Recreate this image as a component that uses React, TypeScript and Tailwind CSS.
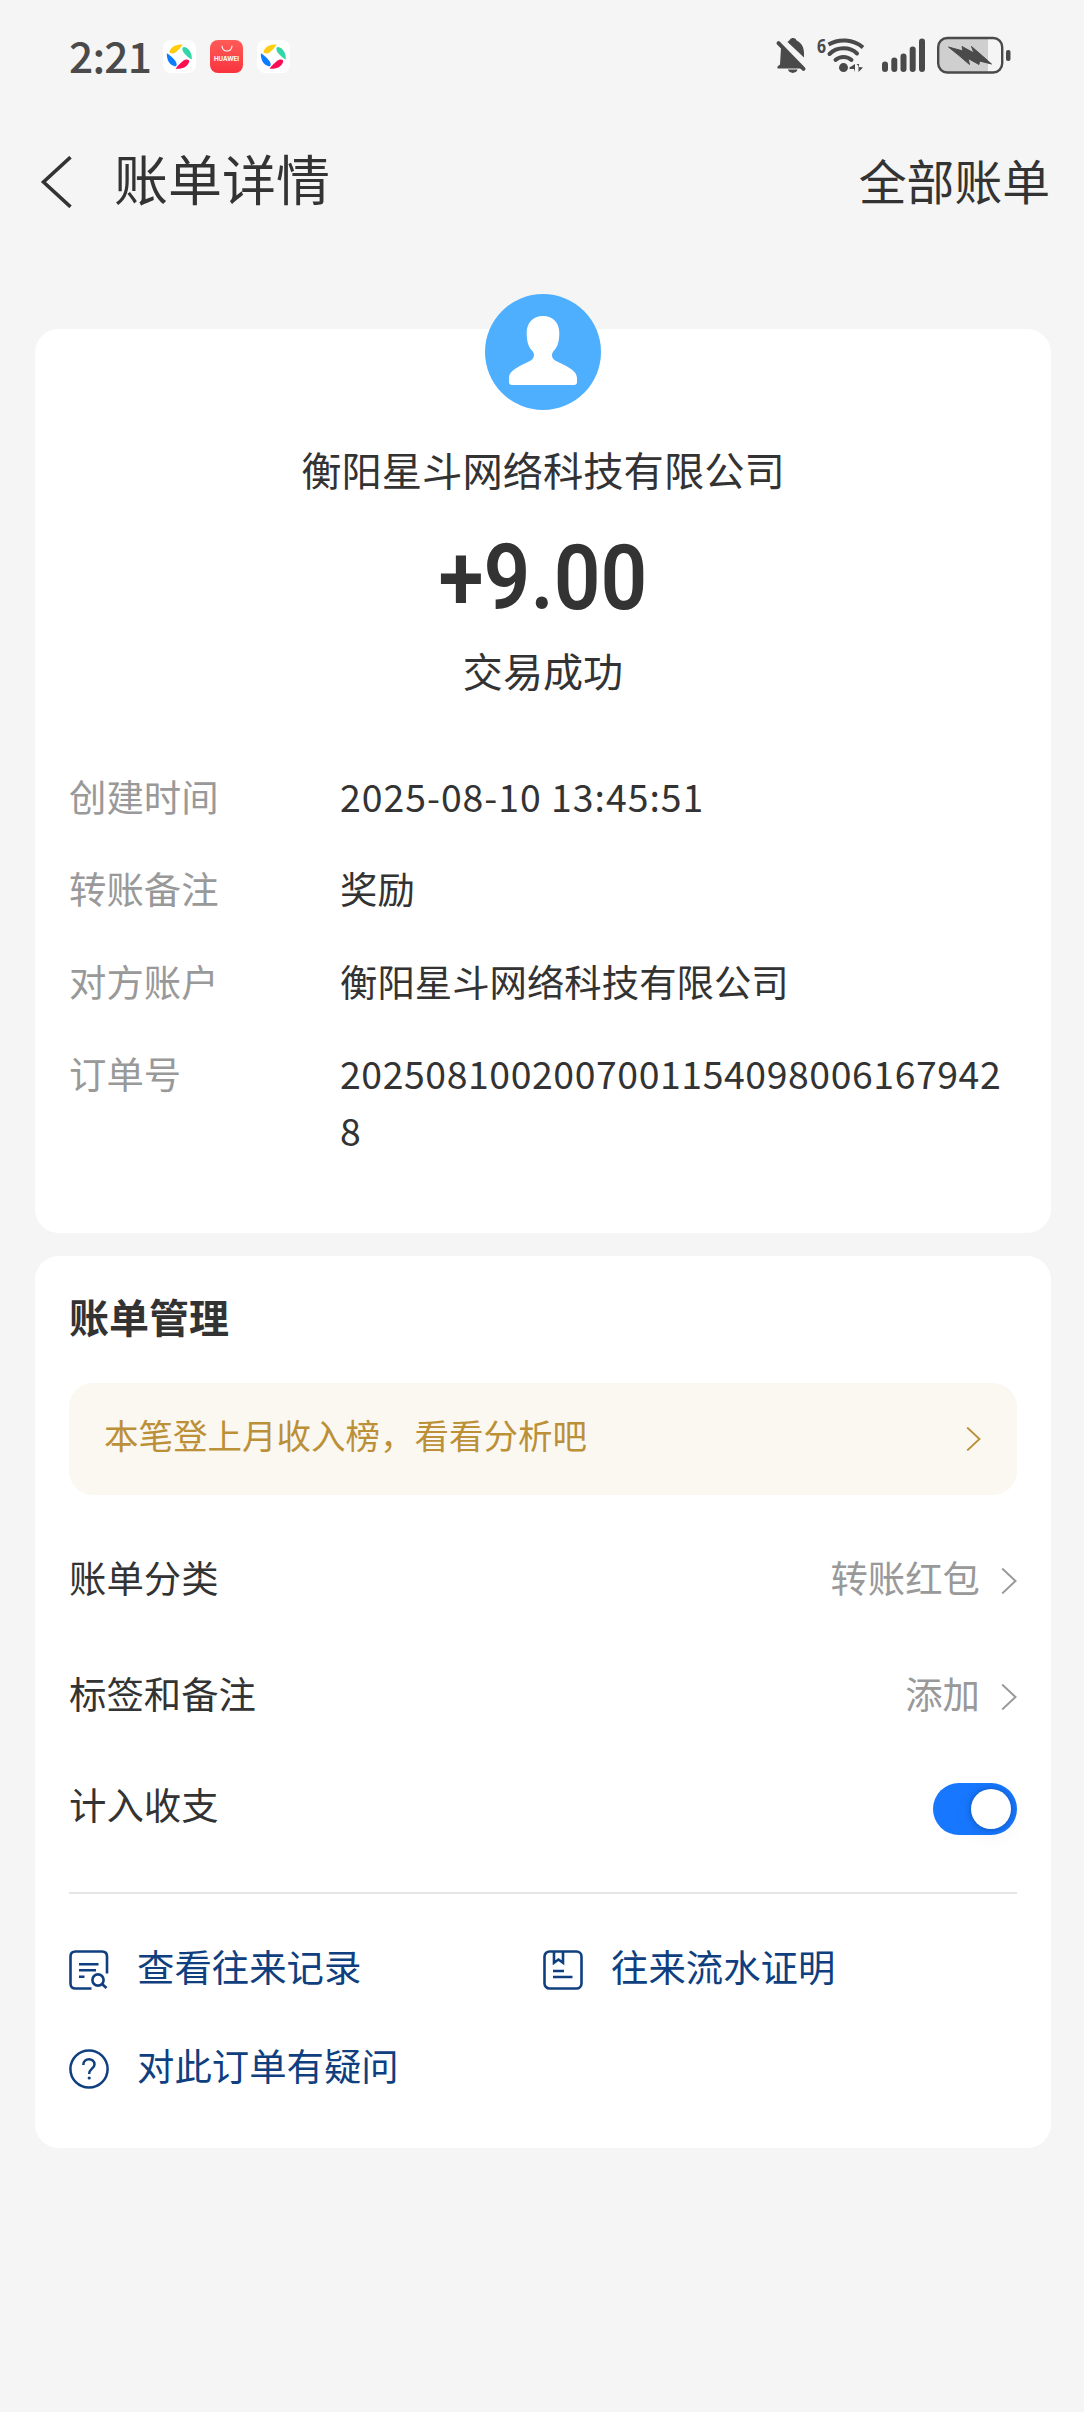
import React from 'react';

type Detail = { label: string; value: string; tracking?: string };

const details: Detail[] = [
  { label: '创建时间', value: '2025-08-10 13:45:51', tracking: 'tracking-[0.98px]' },
  { label: '转账备注', value: '奖励' },
  { label: '对方账户', value: '衡阳星斗网络科技有限公司' },
  { label: '订单号', value: '20250810020070011540980061679428', tracking: 'tracking-[0.58px]' },
];

const BrowserAppIcon = () => (
  <svg className="h-[33px] w-[33px]" viewBox="0 0 33 33" aria-hidden="true">
    <rect width="33" height="33" rx="8" fill="#fff" />
    <path d="M6.6 11.2C8.2 6.8 12.4 4.2 19.6 4.4C18.4 6.6 15.6 10 12.6 12.4C10.2 14.2 6.2 13.6 6.6 11.2Z" fill="#ffcd10" />
    <path d="M21.6 7C26 8.4 29 12.6 28.8 19.6C26.4 18.4 23 15.6 20.8 12.8C18.8 10 18.8 6.4 21.6 7Z" fill="#33d6a6" />
    <path d="M26.2 21.8C24.6 26.4 20.6 29.2 12.6 28.8C14 26.4 17.2 23.4 20.2 20.8C22.8 18.8 26.6 18.8 26.2 21.8Z" fill="#fb0d55" />
    <path d="M11.6 26.2C6.8 24.8 3.6 20.4 3.8 13.2C6.2 14.6 9.6 17.6 12 20.4C14.2 23.4 14.4 26.6 11.6 26.2Z" fill="#0a7cff" />
  </svg>
);

const StoreAppIcon = () => (
  <div className="flex h-[33px] w-[33px] flex-col items-center rounded-[8px] bg-gradient-to-b from-[#ff5a57] to-[#f9323f]">
    <svg className="mt-[5px] h-[8px] w-[14px]" viewBox="0 0 14 8" fill="none" stroke="#fff" strokeWidth="1.1" aria-hidden="true">
      <path d="M2 1C2.4 7.6 11.6 7.6 12 1" strokeLinecap="round" />
    </svg>
    <span className="mt-[2px] font-['Inter'] text-[6.2px] leading-[8px] font-bold text-white">HUAWEI</span>
  </div>
);

const StatusIcons = () => (
  <svg className="h-[40px] w-[240px] overflow-visible" viewBox="0 0 240 40" fill="#4a4a4a" aria-hidden="true">
    {/* muted bell */}
    <path d="M5 12L27 32.5H1.5V30.5L4 28.5Z" />
    <path d="M11.5 6C12.5 5 13.5 4.6 14 3.6C15 1.6 19 1.6 20 3.6C20.4 4.6 21.6 5 23 6C27 9 28.5 13 28 21.5Z" />
    <path d="M2.5 7.2L27.5 32.8" stroke="#4a4a4a" strokeWidth="4" strokeLinecap="round" />
    <path d="M12 33.6H21.5C20.5 38 13 38 12 33.6Z" />
    {/* wifi */}
    <g fill="none" stroke="#4a4a4a" strokeWidth="4">
      <path d="M52.5 8.6C63 2.5 77 3 87 11.5" />
      <path d="M53.5 18C61 10.5 74 10.5 81 17.5" strokeLinecap="round" />
      <path d="M59.5 24C64 20 71 20 75.5 24" strokeLinecap="round" />
    </g>
    <circle cx="67.5" cy="31.6" r="4.5" />
    <path d="M73.5 31.5L79 28V36L78 33H73.5ZM80.5 28H83V31L87 31.5L82.5 36V30Z" />
    <text x="41" y="17" fontFamily="Open Sans" fontSize="20" fontWeight="700" textLength="9" lengthAdjust="spacingAndGlyphs">6</text>
    {/* signal */}
    <rect x="106" y="25.5" width="6" height="10.5" rx="3" />
    <rect x="115.3" y="21.5" width="6" height="14.5" rx="3" />
    <rect x="124.5" y="17.5" width="6" height="18.5" rx="3" />
    <rect x="133.7" y="10.5" width="6" height="25.5" rx="3" />
    <rect x="143" y="2.5" width="6" height="33.5" rx="3" />
    {/* battery */}
    <path d="M170 2H212V36H170Q162.5 36 162.5 28V10Q162.5 2 170 2Z" fill="#cfcfcf" />
    <rect x="162.2" y="2" width="64" height="34.5" rx="9" fill="none" stroke="#4a4a4a" strokeWidth="2.4" />
    <path d="M172.5 11L187 15L186 10.5L198 17L195.5 10.5L206.5 20L215.5 28L203.5 25L203 28.5L192 22.5L193.5 28.5L183 19.5Z" stroke="#4a4a4a" strokeWidth="1" strokeLinejoin="round" />
    <rect x="230" y="14" width="4.5" height="11" rx="2" />
  </svg>
);

const Chevron: React.FC<{ className: string }> = ({ className }) => (
  <svg className={className} viewBox="0 0 16 26" fill="none" stroke="currentColor" strokeWidth="2" aria-hidden="true">
    <path d="M1.2 0.6L14.5 13L1.2 25.4" />
  </svg>
);

const RecordIcon = () => (
  <svg className="h-[40px] w-[40px]" viewBox="0 0 40 40" fill="none" stroke="currentColor" strokeWidth="2.6" aria-hidden="true">
    <path d="M22.5 38.5H6.5Q1.5 38.5 1.5 33.5V6.5Q1.5 1.5 6.5 1.5H33Q38 1.5 38 6.5V23.5" />
    <path d="M10 14.3H29.5M10 20.3H27M10 26.8H15.5" />
    <circle cx="29" cy="30" r="5.6" />
    <path d="M33 34L37.5 38" />
  </svg>
);

const ProofIcon = () => (
  <svg className="h-[40px] w-[40px]" viewBox="0 0 40 40" fill="none" stroke="currentColor" strokeWidth="2.6" aria-hidden="true">
    <rect x="1.5" y="1.5" width="37" height="37" rx="5" />
    <path d="M11 2V12.8L15.5 9.5L20 12.8V2M10 21H21M10 27H29.5" />
  </svg>
);

const HelpIcon = () => (
  <svg className="h-[40px] w-[40px]" viewBox="0 0 40 40" fill="none" stroke="currentColor" strokeWidth="2.5" aria-hidden="true">
    <circle cx="20" cy="20" r="18.6" />
    <path d="M14.3 16C14.3 8.5 25.5 8.5 25.5 15.5C25.5 19.5 20.2 19.5 20.2 25" />
    <circle cx="20.2" cy="29" r="1.6" fill="currentColor" stroke="none" />
  </svg>
);

interface RowProps {
  label: string;
  value: string;
}

const SettingRow: React.FC<RowProps> = ({ label, value }) => (
  <div className="flex h-[116px] items-center justify-between">
    <span className="mb-2">{label}</span>
    <div className="flex items-center text-[#999]">
      <span className="mr-[21px] mb-2">{value}</span>
      <Chevron className="h-[26px] w-[16px]" />
    </div>
  </div>
);

interface LinkProps {
  icon: React.ReactNode;
  label: string;
}

const ActionLink: React.FC<LinkProps> = ({ icon, label }) => (
  <a href="#" className="flex h-[99px] items-center gap-[28px]">
    {icon}
    <span className="mb-[6px]">{label}</span>
  </a>
);

const App: React.FC = () => {
  return (
    <div className="h-[2412px] w-[1084px] overflow-hidden bg-[#f5f5f5] font-['Noto_Sans_CJK_SC',sans-serif] text-[37.4px] leading-[57px] text-[#333]">
      <div className="flex h-[112px] items-center justify-between pr-[68px] pl-[69px]">
        <div className="flex items-center">
          <span className="mr-[17px] mb-[3px] w-[77px] text-[42.5px] font-medium tracking-[-0.8px] text-[#4a4a4a]">2:21</span>
          <div className="flex gap-[14px]">
            <BrowserAppIcon />
            <StoreAppIcon />
            <BrowserAppIcon />
          </div>
        </div>
        <StatusIcons />
      </div>

      <header className="flex h-[134px] items-center justify-between pr-[34px] pl-[40px]">
        <div className="flex items-center">
          <svg className="mt-[5px] h-[52px] w-[32px]" viewBox="0 0 32 52" fill="none" stroke="#333" strokeWidth="3.6" aria-hidden="true">
            <path d="M30.5 1.2L3.5 26L30.5 50.8" />
          </svg>
          <h1 className="mb-[4px] ml-[42px] text-[54px]">账单详情</h1>
        </div>
        <span className="text-[47.8px]">全部账单</span>
      </header>

      <section className="mt-[83px] ml-[35px] h-[904px] w-[1016px] rounded-[24px] bg-white px-[34px]">
        <div className="flex flex-col items-center">
          <svg className="-mt-[35px] h-[116px] w-[116px]" viewBox="0 0 116 116" aria-hidden="true">
            <circle cx="58" cy="58" r="58" fill="#4fafff" />
            <path
              d="M58 22C68 22 74.5 29 74.3 39C74.2 47 73 52 69.5 56C65.5 60 66.5 64.5 71 67C80 71.5 92 76 92 84V88Q92 91 89 91H27Q24 91 24 88V84C24 76 36 71.5 45 67C49.5 64.5 50.5 60 46.5 56C43 52 41.8 47 41.7 39C41.5 29 48 22 58 22Z"
              fill="#fff"
            />
          </svg>
          <p className="mt-[31px] text-[40.3px] leading-[56px]">衡阳星斗网络科技有限公司</p>
          <p className="mt-[45px] scale-x-90 font-['Roboto'] text-[91px] leading-[72px] font-semibold">+9.00</p>
          <p className="mt-[28px] text-[40.1px] leading-[56px]">交易成功</p>
        </div>
        <dl className="mt-[70px] flex flex-col gap-[35.4px]">
          {details.map((it) => (
            <div key={it.label} className="flex">
              <dt className="w-[271px] shrink-0 text-[#999]">{it.label}</dt>
              <dd className={`min-w-0 flex-1 break-all ${it.tracking ?? ''}`}>{it.value}</dd>
            </div>
          ))}
        </dl>
      </section>

      <section className="mt-[23px] ml-[35px] h-[892px] w-[1016px] rounded-[24px] bg-white px-[34px] pt-8">
        <h2 className="text-[40px] leading-[56px] font-bold">账单管理</h2>
        <a href="#" className="mt-[39px] flex h-[112px] items-center justify-between rounded-[24px] bg-[#fbf8f1] pr-[36px] pl-[35px] text-[34.5px] text-[#bb9038]">
          <span className="mb-[10px]">本笔登上月收入榜，看看分析吧</span>
          <Chevron className="h-[24px] w-[15px]" />
        </a>
        <div className="mt-[28px]">
          <SettingRow label="账单分类" value="转账红包" />
          <SettingRow label="标签和备注" value="添加" />
          <div className="flex h-[108px] items-center justify-between">
            <span className="mb-[9px]">计入收支</span>
            <button
              type="button"
              role="switch"
              aria-checked="true"
              aria-label="计入收支"
              className="flex h-[52px] w-[84px] items-center justify-end rounded-full bg-[#1777ff] pr-[6px]"
            >
              <span className="h-[40px] w-[40px] rounded-full bg-white shadow-[0_0_6px_rgba(0,0,0,0.3),0_6px_24px_rgba(0,0,0,0.05)]" />
            </button>
          </div>
        </div>
        <div className="mt-[29px] h-[2px] bg-[#e5e5e5]" />
        <div className="mt-[26px] grid grid-cols-2 text-[#0f3f7f]">
          <ActionLink icon={<RecordIcon />} label="查看往来记录" />
          <ActionLink icon={<ProofIcon />} label="往来流水证明" />
          <ActionLink icon={<HelpIcon />} label="对此订单有疑问" />
        </div>
      </section>
    </div>
  );
};

export default App;
